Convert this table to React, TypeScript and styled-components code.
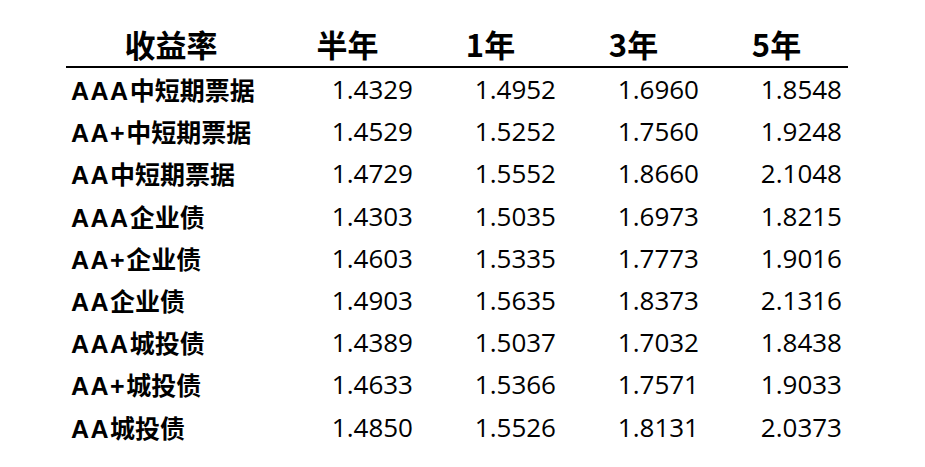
import React from "react";
import styled, { createGlobalStyle } from "styled-components";

const rows: [string, string, string[]][] = [
  ["AAA", "中短期票据", ["1.4329", "1.4952", "1.6960", "1.8548"]],
  ["AA+", "中短期票据", ["1.4529", "1.5252", "1.7560", "1.9248"]],
  ["AA", "中短期票据", ["1.4729", "1.5552", "1.8660", "2.1048"]],
  ["AAA", "企业债", ["1.4303", "1.5035", "1.6973", "1.8215"]],
  ["AA+", "企业债", ["1.4603", "1.5335", "1.7773", "1.9016"]],
  ["AA", "企业债", ["1.4903", "1.5635", "1.8373", "2.1316"]],
  ["AAA", "城投债", ["1.4389", "1.5037", "1.7032", "1.8438"]],
  ["AA+", "城投债", ["1.4633", "1.5366", "1.7571", "1.9033"]],
  ["AA", "城投债", ["1.4850", "1.5526", "1.8131", "2.0373"]],
];

const heads = ["半年", "1年", "3年", "5年"];

export default function App() {
  return (
    <>
      <GlobalStyle />
      <Page>
        <Table>
          <thead>
            <tr>
              <HeadCell>收益率</HeadCell>
              {heads.map((h) => (
                <HeadCell key={h}>{h}</HeadCell>
              ))}
            </tr>
          </thead>
          <tbody>
            {rows.map(([grade, kind, vals]) => (
              <tr key={grade + kind}>
                <NameCell>
                  <Grade>{grade}</Grade>
                  {kind}
                </NameCell>
                {vals.map((v, i) => (
                  <ValueCell key={i}>{v}</ValueCell>
                ))}
              </tr>
            ))}
          </tbody>
        </Table>
      </Page>
    </>
  );
}

const GlobalStyle = createGlobalStyle`
  body {
    margin: 0;
    background: #ffffff;
    font-family: "Noto Sans CJK SC", "Noto Sans", sans-serif;
    color: #000;
  }
`;

const Page = styled.div`
  width: 925px;
  height: 467px;
  padding: 21px 0 0 66px;
  box-sizing: border-box;
`;

const Table = styled.table`
  border-collapse: collapse;
  table-layout: fixed;
  width: 782px;
`;

const HeadCell = styled.th`
  width: 143px;
  height: 45px;
  padding: 0;
  font-size: 31px;
  font-weight: 700;
  text-align: center;
  vertical-align: middle;
  border-bottom: 2px solid #000;
  line-height: 1;
  &:first-child {
    width: 210px;
  }
`;

const NameCell = styled.td`
  height: 42.2px;
  padding: 0 0 0 5px;
  font-size: 25px;
  font-weight: 700;
  white-space: nowrap;
  vertical-align: middle;
`;

const Grade = styled.span`
  font-family: "Liberation Sans", Arial, sans-serif;
  letter-spacing: 1.5px;
`;

const ValueCell = styled.td`
  height: 42.2px;
  padding: 0 6px 0 0;
  font-family: "Open Sans", "Noto Sans", sans-serif;
  font-size: 26px;
  text-align: right;
  vertical-align: middle;
`;
